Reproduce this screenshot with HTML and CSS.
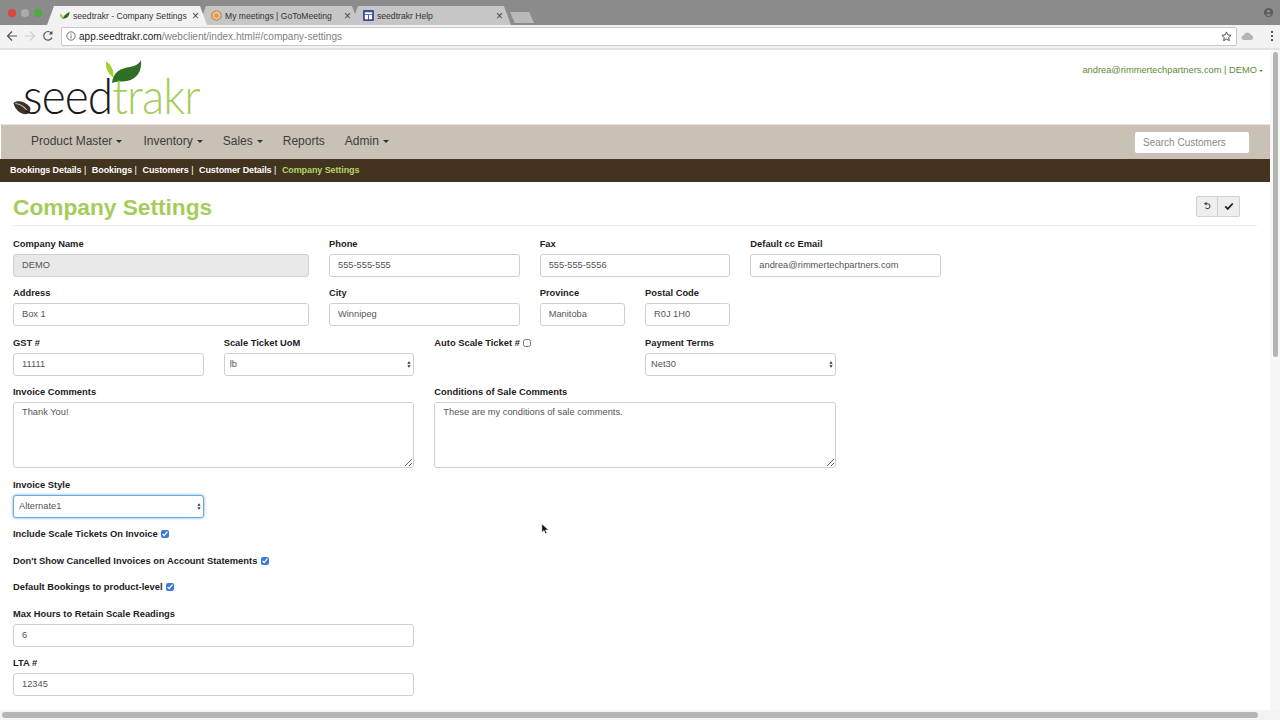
FILE: index.html
```html
<!DOCTYPE html>
<html>
<head>
    <meta charset="utf-8">
    <title>seedtrakr - Company Settings</title>
    <link rel="stylesheet" href="styles.css">
</head>
<body>
    <div class="tabstrip">
        <div class="lights"><i class="red"></i><i class="grey"></i><i class="green"></i></div>
        <div class="tab active">
            <svg class="favicon" viewBox="0 0 12 12"><path d="M1 3.500l3 2.500 1 4C3 10 1 8 1 3.500z" fill="#9fc94f"/><path d="M4.500 9.500C5 5.500 8 4.500 11.500 2c0 4-2 7.500-7 7.500z" fill="#2f6b22"/></svg>
            <span class="tab-title">seedtrakr - Company Settings</span><span class="tab-x">&#215;</span>
        </div>
        <div class="tab">
            <svg class="favicon" viewBox="0 0 12 12"><path d="M6 .5l5 2.800v5.400l-5 2.800-5-2.800V3.300z" fill="#f0c48e" stroke="#b9793c"/><path d="M6 3.500l2.500 1.300v2.600L6 8.700 3.500 7.400V4.800z" fill="#d99a5a"/></svg>
            <span class="tab-title">My meetings | GoToMeeting</span><span class="tab-x">&#215;</span>
        </div>
        <div class="tab">
            <svg class="favicon" viewBox="0 0 12 12"><rect width="12" height="12" rx="1" fill="#3b4ba0"/><path d="M2 2.500h8v2H2zM2 5.500h3.500V10H2zM6.500 5.500H10V10H6.500z" fill="#fff"/></svg>
            <span class="tab-title">seedtrakr Help</span><span class="tab-x">&#215;</span>
        </div>
        <div class="newtab"></div>
        <svg class="profile" viewBox="0 0 12 12"><circle cx="6" cy="6" r="5" fill="#5c5c5c"/><circle cx="6" cy="4.600" r="1.800" fill="#8a8a8a"/><path d="M2.800 8.800C3.500 7.400 8.500 7.400 9.200 8.800 8 10 4 10 2.800 8.800z" fill="#8a8a8a"/></svg>
    </div>
    <div class="toolbar">
        <svg class="tool" viewBox="0 0 12 12"><path d="M11 6H2M6 1.500L1.500 6 6 10.500" fill="none" stroke="#555" stroke-width="1.200"/></svg>
        <svg class="tool" viewBox="0 0 12 12"><path d="M1 6h9M6 1.500L10.500 6 6 10.500" fill="none" stroke="#cfcfcf" stroke-width="1.200"/></svg>
        <svg class="tool" viewBox="0 0 12 12"><path d="M10 7.500A4.300 4.300 0 1 1 9.300 3" fill="none" stroke="#555" stroke-width="1.200"/><path d="M10.500 .8v3.700H6.800z" fill="#555"/></svg>
        <div class="omnibox">
            <svg class="info" viewBox="0 0 12 12"><circle cx="6" cy="6" r="5" fill="none" stroke="#555"/><path d="M6 5.200v3.600M6 3v1.200" stroke="#555" stroke-width="1.100"/></svg>
            <span class="host">app.seedtrakr.com</span><span class="path">/webclient/index.html#/company-settings</span>
            <svg class="star" viewBox="0 0 12 12"><path d="M6 1l1.500 3.300 3.500.4-2.600 2.400.7 3.500L6 8.800l-3.100 1.800.7-3.500L1 4.700l3.500-.4z" fill="none" stroke="#444"/></svg>
        </div>
        <svg class="cloud" viewBox="0 0 16 12"><path d="M4 11a3 3 0 0 1-.5-6A4.500 4.500 0 0 1 12 4.500 3.300 3.300 0 0 1 12.500 11z" fill="#b4b4b4"/></svg>
        <div class="dots"><i></i><i></i><i></i></div>
    </div>

    <div class="viewport">
        <div class="page">
            <div class="brand-row">
                <div class="logo">
                    <svg class="logo-seed" viewBox="0 0 18 15"><path d="M.5 3C4 0 12 1 17 7c1 3 0 6-3 7C8 15 2 10 .5 3z" fill="#3b3228"/><path d="M2.500 3.500C7 4 12 7 15 12" fill="none" stroke="#d5cfc5" stroke-width="1.200"/></svg>
                    <svg class="logo-leaf" viewBox="0 0 38 24"><path d="M2 1.500C7 4 10 10 9.500 17.500 4.500 14.500 1.500 9 2 1.500z" fill="#a5d130"/><path d="M8 23C9 12 17 8 26 7c5-1 9-3 11-7 1 10-3 19-14 21-6 1-11 0-15 2z" fill="#2f6f25"/></svg>
                    <span class="logo-text"><span class="logo-seed-text">seed</span><span class="logo-trakr-text">trakr</span></span>
                </div>
                <div class="user-menu">andrea@rimmertechpartners.com | DEMO<span class="caret small"></span></div>
            </div>

            <nav class="mainnav">
                <div class="mainnav-links">
                    <a>Product Master<span class="caret"></span></a>
                    <a>Inventory<span class="caret"></span></a>
                    <a>Sales<span class="caret"></span></a>
                    <a>Reports</a>
                    <a>Admin<span class="caret"></span></a>
                </div>
                <input class="search" placeholder="Search Customers">
            </nav>

            <div class="crumbs">
                <a>Bookings Details</a><span>|</span>
                <a>Bookings</a><span>|</span>
                <a>Customers</a><span>|</span>
                <a>Customer Details</a><span>|</span>
                <a class="current">Company Settings</a>
            </div>

            <div class="content">
                <div class="title-row">
                    <h1>Company Settings</h1>
                    <div class="btn-group">
                        <button><svg viewBox="0 0 12 12"><path d="M3.500 3.200H7a3 3 0 1 1-3 4.500" fill="none" stroke="#444" stroke-width="1.300"/><path d="M5.500 .8v4.600L2.200 3.200z" fill="#444"/></svg></button>
                        <button><svg viewBox="0 0 12 12"><path d="M1.500 6.500L4.500 9.500 10.500 3" fill="none" stroke="#222" stroke-width="2.200"/></svg></button>
                    </div>
                </div>

                <div class="row">
                    <div class="field c3"><label>Company Name</label><input value="DEMO" disabled></div>
                    <div class="field c2"><label>Phone</label><input value="555-555-555"></div>
                    <div class="field c2"><label>Fax</label><input value="555-555-5556"></div>
                    <div class="field c2"><label>Default cc Email</label><input value="andrea@rimmertechpartners.com"></div>
                </div>
                <div class="row">
                    <div class="field c3"><label>Address</label><input value="Box 1"></div>
                    <div class="field c2"><label>City</label><input value="Winnipeg"></div>
                    <div class="field c1"><label>Province</label><input value="Manitoba"></div>
                    <div class="field c1"><label>Postal Code</label><input value="R0J 1H0"></div>
                </div>
                <div class="row">
                    <div class="field c2"><label>GST #</label><input value="11111"></div>
                    <div class="field c2"><label>Scale Ticket UoM</label>
                        <div class="select"><select><option>lb</option></select><svg viewBox="0 0 6 10"><path d="M3 0l2.500 4h-5zM3 10L.5 6h5z"/></svg></div>
                    </div>
                    <div class="field c2"><label>Auto Scale Ticket # <input class="check" type="checkbox"></label></div>
                    <div class="field c2"><label>Payment Terms</label>
                        <div class="select"><select><option>Net30</option></select><svg viewBox="0 0 6 10"><path d="M3 0l2.500 4h-5zM3 10L.5 6h5z"/></svg></div>
                    </div>
                </div>
                <div class="row">
                    <div class="field c4"><label>Invoice Comments</label><textarea>Thank You!</textarea></div>
                    <div class="field c4"><label>Conditions of Sale Comments</label><textarea>These are my conditions of sale comments.</textarea></div>
                </div>
                <div class="row">
                    <div class="field c2"><label>Invoice Style</label>
                        <div class="select focus"><select><option>Alternate1</option></select><svg viewBox="0 0 6 10"><path d="M3 0l2.500 4h-5zM3 10L.5 6h5z"/></svg></div>
                    </div>
                </div>
                <div class="check-row"><label>Include Scale Tickets On Invoice <input class="check" type="checkbox" checked></label></div>
                <div class="check-row"><label>Don't Show Cancelled Invoices on Account Statements <input class="check" type="checkbox" checked></label></div>
                <div class="check-row"><label>Default Bookings to product-level <input class="check" type="checkbox" checked></label></div>
                <div class="row">
                    <div class="field c4"><label>Max Hours to Retain Scale Readings</label><input value="6"></div>
                </div>
                <div class="row">
                    <div class="field c4"><label>LTA #</label><input value="12345"></div>
                </div>
            </div>
        </div>
        <div class="vbar"><i></i></div>
    </div>
    <div class="hbar"><i></i></div>

    <svg class="cursor" viewBox="0 0 10 15"><path d="M1 1v11l2.800-2.600 1.700 4 1.900-.8-1.700-3.900H9.500z" fill="#111" stroke="#fff" stroke-width=".8"/></svg>
</body>
</html>
```

FILE: styles.css
```css
* {
    box-sizing: border-box;
}

html, body {
    margin: 0;
    height: 720px;
    overflow: hidden;
}

body {
    font-family: "Liberation Sans", Arial, sans-serif;
    font-size: 10px;
    color: #333;
    background: #fff;
    position: relative;
}

/* browser chrome */
.tabstrip {
    height: 25px;
    background: #8b8b8b;
    display: flex;
    align-items: flex-end;
    position: relative;
}

.lights {
    width: 47px;
    height: 25px;
    padding-left: 8px;
    display: flex;
    gap: 5px;
    align-items: center;
}

.lights i {
    width: 8px;
    height: 8px;
    border-radius: 50%;
}

.lights .red { background: #d9453f; }
.lights .grey { background: #ababab; }
.lights .green { background: #4aae3c; }

.tab {
    width: 160px;
    height: 19px;
    margin-right: -8px;
    padding: 0 8px 0 12px;
    display: flex;
    align-items: center;
    background: #c6c6c6;
    color: #333;
    font-size: 8.600px;
    clip-path: polygon(0 100%, 7px 0, calc(100% - 7px) 0, 100% 100%);
}

.tab.active {
    background: #f2f2f2;
    z-index: 1;
}

.favicon {
    width: 11px;
    height: 11px;
    margin-right: 3px;
    flex: none;
}

.tab-title {
    flex: 1;
    white-space: nowrap;
}

.tab-x {
    font-size: 12px;
    line-height: 12px;
    color: #444;
}

.newtab {
    width: 24px;
    height: 11px;
    margin: 0 0 2px 7px;
    background: #b9b9b9;
    clip-path: polygon(0 0, 80% 0, 100% 100%, 20% 100%);
}

.profile {
    position: absolute;
    right: 6px;
    top: 7px;
    width: 11px;
    height: 11px;
}

.toolbar {
    height: 25px;
    background: #f2f2f2;
    border-bottom: 2px solid #e2e2e2;
    display: flex;
    align-items: center;
    padding: 0 7px 1px 6px;
}

.tool {
    width: 12px;
    height: 12px;
    margin-right: 6px;
}

.omnibox {
    width: 1176px;
    height: 19px;
    margin-left: 1px;
    background: #fff;
    border: 1px solid #c8c8c8;
    border-radius: 2px;
    display: flex;
    align-items: center;
    padding: 0 4px;
    font-size: 10.050px;
    color: #808080;
}

.info {
    width: 10px;
    height: 10px;
    margin-right: 3px;
    flex: none;
}

.host {
    color: #222;
}

.star {
    width: 11px;
    height: 11px;
    margin-left: auto;
}

.cloud {
    width: 13px;
    height: 10px;
    margin-left: 4px;
}

.dots {
    margin-left: auto;
    display: flex;
    flex-direction: column;
    gap: 2px;
}

.dots i {
    width: 2px;
    height: 2px;
    background: #5c5c5c;
}

/* page */
.viewport {
    height: 660px;
    display: flex;
    overflow: hidden;
}

.page {
    width: 1270px;
    flex: none;
}

.vbar {
    flex: 1;
    background: #f7f7f7;
    padding: 2px 2px 0 3px;
}

.vbar i {
    display: block;
    height: 305px;
    background: #b5b5b5;
    border-radius: 3px;
}

.hbar {
    height: 10px;
    background: #f3f3f3;
    padding: 2px 22px 2px 2px;
}

.hbar i {
    display: block;
    height: 6px;
    background: #b5b5b5;
    border-radius: 3px;
}

.brand-row {
    height: 75px;
    display: flex;
    justify-content: space-between;
    border-bottom: 1px solid #e8e4de;
}

.logo {
    position: relative;
    width: 200px;
    padding: 15px 0 0 23px;
    font-family: Lato, "Open Sans", sans-serif;
    font-weight: 300;
    font-size: 50px;
    line-height: 60px;
    letter-spacing: -1px;
    white-space: nowrap;
}

.logo-text {
    display: inline-block;
    transform: scaleX(0.92);
    transform-origin: left center;
}

.logo-seed-text {
    color: #1a1a1a;
}

.logo-trakr-text {
    color: #a5cc5a;
}

.logo-seed {
    position: absolute;
    left: 13px;
    top: 50px;
    width: 18px;
    height: 15px;
}

.logo-leaf {
    position: absolute;
    left: 104px;
    top: 10px;
    width: 38px;
    height: 24px;
}

.user-menu {
    margin: 14px 7px 0 0;
    color: #5e8a33;
    font-size: 9.300px;
    line-height: 12px;
}

.caret {
    display: inline-block;
    margin-left: 4px;
    vertical-align: middle;
    border-top: 3px solid #333;
    border-left: 3px solid transparent;
    border-right: 3px solid transparent;
}

.caret.small {
    margin-left: 2px;
    border-top-color: #5e8a33;
    border-width: 2px 2px 0;
}

.mainnav {
    height: 34px;
    margin-left: 1px;
    background: #c9c0b6;
    display: flex;
    align-items: center;
    justify-content: space-between;
    padding: 0 21px 0 20px;
}

.mainnav-links {
    display: flex;
    gap: 20px;
    padding: 0 0 3px 10px;
    font-size: 12px;
    color: #3c3c3c;
}

.mainnav-links a:first-child {
    margin-right: 1px;
}

.search {
    width: 114px;
    height: 21px;
    padding: 0 8px;
    border: 0;
    border-radius: 2px;
    background: #fff;
    font: 10px "Liberation Sans", Arial, sans-serif;
}

.search::placeholder {
    color: #8a8a8a;
}

.crumbs {
    height: 23px;
    background: #43341f;
    display: flex;
    align-items: center;
    gap: 2.500px;
    padding: 0 0 1px 10px;
    color: #fff;
    font-size: 9px;
    font-weight: bold;
    letter-spacing: -0.100px;
}

.crumbs span {
    font-weight: normal;
    margin-right: 3.200px;
}

.crumbs .current {
    color: #b5d56a;
}

.content {
    padding: 0 13px;
}

.title-row {
    height: 44px;
    margin-bottom: 12px;
    display: flex;
    justify-content: space-between;
    align-items: center;
    border-bottom: 1px solid #eeeeee;
    padding: 7px 17px 0 0;
}

h1 {
    margin: 0;
    font-size: 22.700px;
    line-height: 28px;
    font-weight: bold;
    color: #a5cc5a;
}

.btn-group {
    display: flex;
    margin-top: -2px;
}

.btn-group button {
    width: 22px;
    height: 21px;
    padding: 0;
    display: flex;
    align-items: center;
    justify-content: center;
    background: #eeeeee;
    border: 1px solid #d0d0d0;
    border-radius: 2px 0 0 2px;
}

.btn-group button + button {
    border-left: 0;
    border-radius: 0 2px 2px 0;
}

.btn-group svg {
    width: 10px;
    height: 10px;
}

.row {
    display: grid;
    grid-template-columns: repeat(12, 1fr);
    column-gap: 20px;
    margin-bottom: 10.400px;
}

.c1 { grid-column: span 1; }
.c2 { grid-column: span 2; }
.c3 { grid-column: span 3; }
.c4 { grid-column: span 4; }

label {
    display: block;
    height: 12px;
    line-height: 12px;
    color: #222;
    font-size: 9.350px;
    font-weight: bold;
    white-space: nowrap;
}

.field label {
    margin-bottom: 4px;
}

.field input:not(.check), textarea, select {
    display: block;
    width: 100%;
    height: 23px;
    padding: 0 8px 1px;
    background: #fff;
    border: 1px solid #cfcfcf;
    border-radius: 3px;
    font: 9.300px "Liberation Sans", Arial, sans-serif;
    color: #555;
    outline: 0;
}

.field input:disabled {
    background: #e8e8e8;
}

.field textarea {
    height: 66px;
    padding-top: 4px;
}

.select {
    position: relative;
}

select {
    appearance: none;
}

.field select {
    padding-left: 5px;
}

.select svg {
    position: absolute;
    right: 3px;
    top: 8px;
    width: 4px;
    height: 7px;
    fill: #333;
}

.select.focus select {
    border-color: #6ea8dc;
    box-shadow: 0 0 3px #6ea8dc;
}

.check-row {
    height: 26.700px;
}

.check {
    width: 8px;
    height: 8px;
    margin: 0 0 0 1px;
    vertical-align: -1px;
    accent-color: #3b7bdc;
}

.cursor {
    position: absolute;
    left: 541px;
    top: 523px;
    width: 8px;
    height: 12px;
}
```
